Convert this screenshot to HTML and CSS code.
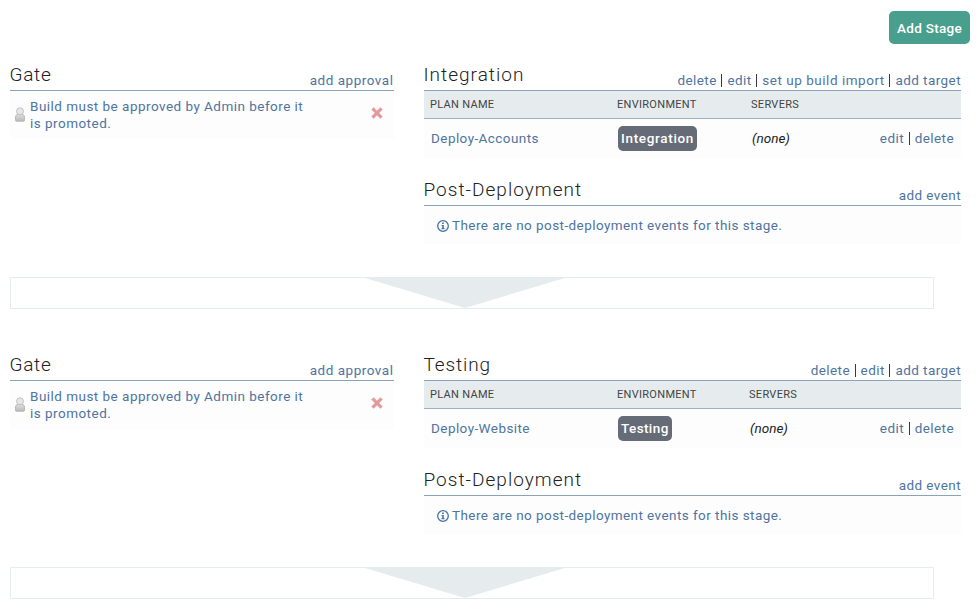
FILE: index.html
```html
<!DOCTYPE html>
<html lang="en">
<head>
<meta charset="utf-8">
<title>Stages</title>
<link rel="stylesheet" href="styles.css">
</head>
<body>
<svg class="defs" width="0" height="0">
  <defs>
    <linearGradient id="grey" x1="0" y1="0" x2="0" y2="1"><stop offset="0" stop-color="#dedede"/><stop offset="1" stop-color="#b8b8b8"/></linearGradient>
    <symbol id="person" viewBox="0 0 10 15"><path d="M.5 13.5V10Q.5 7.5 3 7.5h4q2.500 0 2.500 2.500v3.500q0 .8-.8.8H1.300q-.8 0-.8-.8z" fill="url(#grey)" stroke="#b0b0b0" stroke-width=".8"/><circle cx="5" cy="4.300" r="3.500" fill="#e6e6e6" stroke="#bdbdbd" stroke-width=".9"/></symbol>
    <symbol id="cross" viewBox="0 0 10 10"><path d="M1.200 1.200l7.600 7.600M8.800 1.200l-7.600 7.600" stroke="#e49a9c" stroke-width="2.700"/></symbol>
    <symbol id="info" viewBox="0 0 12 12"><circle cx="6" cy="6" r="5.300" fill="none" stroke="#44739e" stroke-width="1.300"/><path d="M5.100 2.600h1.700v1.500H5.100zM4.500 5h2.300v3.300h.8v1H4.400v-1h.8V6h-.7z" fill="#44739e"/></symbol>
  </defs>
</svg>
<header class="toolbar"><button class="add-stage">Add Stage</button></header>

<main>
<section class="stage">
  <div class="gate">
    <div class="heading"><h2 class="short">Gate</h2><a class="approve">add approval</a></div>
    <div class="approval"><svg class="person"><use href="#person"/></svg><p>Build must be approved by Admin before it<br>is promoted.</p><svg class="cross"><use href="#cross"/></svg></div>
  </div>
  <div class="detail">
    <div class="heading"><h2>Integration</h2><nav><a>delete</a><i></i><a>edit</a><i></i><a class="wide">set up build import</a><i></i><a>add target</a></nav></div>
    <div class="row head"><span>PLAN NAME</span><span>ENVIRONMENT</span><span>SERVERS</span></div>
    <div class="row plan"><a>Deploy-Accounts</a><span><b class="badge">Integration</b></span><em>(none)</em><nav><a>edit</a><i></i><a>delete</a></nav></div>
    <div class="heading post"><h2>Post-Deployment</h2><a>add event</a></div>
    <div class="empty"><svg class="info"><use href="#info"/></svg><span>There are no post-deployment events for this stage.</span></div>
  </div>
</section>
<div class="flow"><svg width="200" height="30" viewBox="0 0 200 30"><path d="M0 0h200L100 30z" fill="#e6ecee"/></svg></div>

<section class="stage narrow">
  <div class="gate">
    <div class="heading"><h2 class="short">Gate</h2><a class="approve">add approval</a></div>
    <div class="approval"><svg class="person"><use href="#person"/></svg><p>Build must be approved by Admin before it<br>is promoted.</p><svg class="cross"><use href="#cross"/></svg></div>
  </div>
  <div class="detail">
    <div class="heading"><h2 class="mid">Testing</h2><nav><a>delete</a><i></i><a>edit</a><i></i><a>add target</a></nav></div>
    <div class="row head"><span>PLAN NAME</span><span>ENVIRONMENT</span><span>SERVERS</span></div>
    <div class="row plan"><a>Deploy-Website</a><span><b class="badge tight">Testing</b></span><em>(none)</em><nav><a>edit</a><i></i><a>delete</a></nav></div>
    <div class="heading post"><h2>Post-Deployment</h2><a>add event</a></div>
    <div class="empty"><svg class="info"><use href="#info"/></svg><span>There are no post-deployment events for this stage.</span></div>
  </div>
</section>
<div class="flow"><svg width="200" height="30" viewBox="0 0 200 30"><path d="M0 0h200L100 30z" fill="#e6ecee"/></svg></div>
</main>
</body>
</html>
```
FILE: styles.css
```css
* { box-sizing: border-box; }
body {
  margin: 0;
  height: 610px;
  overflow: hidden;
  background: #fff;
  color: #222;
  font: 13.5px/17px Roboto, "Liberation Sans", sans-serif;
  letter-spacing: .43px;
}
.defs { display: block; }
a { color: #4f74a0; white-space: nowrap; }
a.wide { letter-spacing: .53px; }
a.approve { letter-spacing: .52px; }
nav { display: flex; align-items: center; }
nav i { width: 1px; height: 13px; margin: 0 5px 0 4.600px; background: #39354a; }

.toolbar { display: flex; justify-content: flex-end; padding: 11px 8px 0 0; }
.add-stage {
  width: 81px;
  height: 33px;
  padding: 0;
  border: 0;
  border-radius: 5px;
  background: #499f8d;
  color: #fff;
  font: 500 13.5px Roboto, sans-serif;
  letter-spacing: .3px;
}

.stage {
  display: grid;
  grid-template-columns: 384px 537px;
  column-gap: 30px;
  height: 233px;
  padding-left: 10px;
}
main { padding-top: 14px; }
.heading {
  display: flex;
  justify-content: space-between;
  align-items: flex-end;
  height: 33px;
  border-bottom: 1px solid #8ba3b8;
}
.heading > a, .heading > nav { padding-bottom: 1px; }
.gate .heading > a { margin-right: .5px; }
h2 {
  margin: 0 0 3px -.5px;
  color: #222;
  font-size: 19px;
  font-weight: 300;
  line-height: 24px;
  letter-spacing: 1.02px;
}
h2.short { letter-spacing: .7px; }
h2.mid { letter-spacing: .9px; }

.approval {
  display: flex;
  height: 48px;
  padding: 7px 11px 0 5px;
  background: #fdfdfd;
  color: #4f74a0;
}
.approval p { flex: 1; margin: 0 0 0 5px; letter-spacing: .47px; white-space: nowrap; }
.person { width: 10px; height: 15px; margin-top: 9px; }
.cross { width: 12px; height: 12px; margin-top: 9px; }

.row {
  display: grid;
  grid-template-columns: 187px 134px 1fr auto;
  align-items: center;
  padding: 0 7px 0 6px;
}
.narrow .row { grid-template-columns: 187px 132px 1fr auto; }
.head {
  height: 28px;
  border-bottom: 1px solid #9fb0be;
  background: #e6ecee;
  color: #444;
  font-size: 11px;
  letter-spacing: .3px;
}
.plan { height: 39px; padding-left: 7px; background: #fdfdfd; }
.plan em { letter-spacing: 0; }
.badge {
  display: inline-block;
  height: 25px;
  padding: 0 3px;
  border-radius: 5px;
  background: #666c77;
  color: #fff;
  font-weight: 500;
  line-height: 25px;
  letter-spacing: .67px;
  vertical-align: middle;
}
.badge.tight { letter-spacing: .4px; }

.post { margin-top: 15px; }
.empty {
  display: flex;
  align-items: center;
  gap: 3px;
  height: 38px;
  padding-left: 13px;
  background: #fdfdfd;
  color: #4f74a0;
  white-space: nowrap;
}
.info { width: 12px; height: 12px; margin-top: 1px; }
.empty span { letter-spacing: .43px; }

.flow {
  display: flex;
  justify-content: center;
  width: 924px;
  height: 32px;
  margin: -14px 0 0 10px;
  padding-right: 14px;
  border: 1px solid #e6ecee;
}
.flow + .stage { margin-top: 39px; }
```
